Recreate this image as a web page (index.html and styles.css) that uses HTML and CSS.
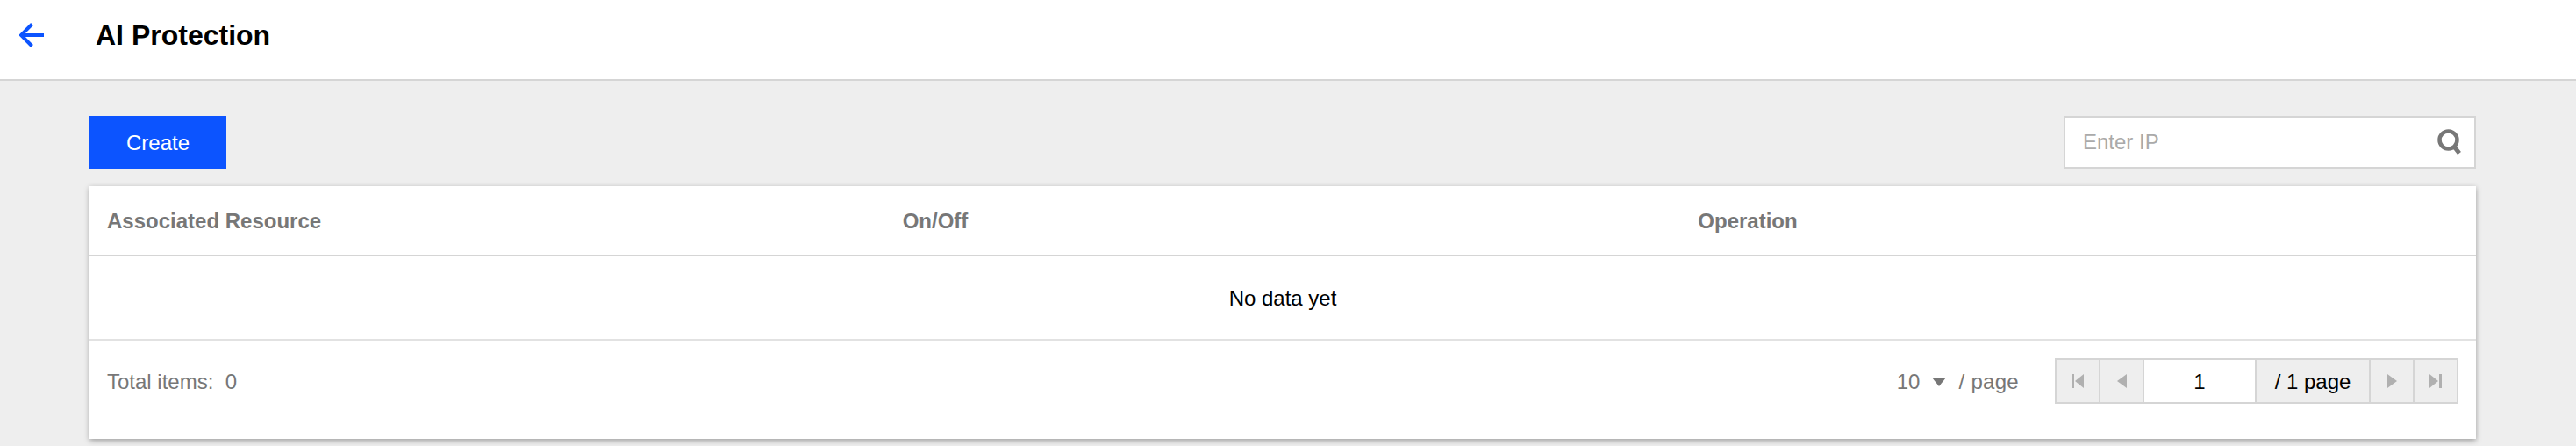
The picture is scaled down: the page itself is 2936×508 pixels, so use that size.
FILE: index.html
```html
<!DOCTYPE html>
<html lang="en">
<head>
<meta charset="utf-8">
<title>AI Protection</title>
<link rel="stylesheet" href="styles.css">
</head>
<body>
<header class="topbar">
  <a class="back" href="#" aria-label="Back">
    <svg width="28" height="28" viewBox="0 0 28 28"><path d="M28 14H3M14.500 1.500L2 14l12.500 12.500" fill="none" stroke="#0c54ff" stroke-width="4"/></svg>
  </a>
  <h1 class="title">AI Protection</h1>
</header>
<main class="content">
  <div class="toolbar">
    <button class="create" type="button">Create</button>
    <div class="search">
      <span class="placeholder">Enter IP</span>
      <svg class="search-icon" width="28" height="30" viewBox="0 0 28 30"><circle cx="12.500" cy="12.500" r="10" fill="none" stroke="#777" stroke-width="4.500"/><path d="M19 20l6 7.500" stroke="#777" stroke-width="5" fill="none"/></svg>
    </div>
  </div>
  <section class="panel">
    <div class="row head">
      <div class="cell">Associated Resource</div>
      <div class="cell">On/Off</div>
      <div class="cell">Operation</div>
    </div>
    <div class="empty">No data yet</div>
    <footer class="foot">
      <div class="total">Total items:&nbsp; 0</div>
      <div class="size">
        <span>10</span>
        <svg width="16" height="10" viewBox="0 0 16 10"><path d="M0 0h16L8 10z" fill="#777"/></svg>
        <span class="per">/ page</span>
      </div>
      <div class="pager">
        <div class="pbtn"><svg width="14" height="16" viewBox="0 0 14 16"><path d="M0 0h3v16H0zM14 0v16L4 8z" fill="#b0b0b0"/></svg></div>
        <div class="pbtn"><svg width="11" height="16" viewBox="0 0 11 16"><path d="M11 0v16L0 8z" fill="#b0b0b0"/></svg></div>
        <div class="pinput">1</div>
        <div class="ptotal">/ 1 page</div>
        <div class="pbtn"><svg width="11" height="16" viewBox="0 0 11 16"><path d="M0 0v16l11-8z" fill="#b0b0b0"/></svg></div>
        <div class="pbtn last"><svg width="14" height="16" viewBox="0 0 14 16"><path d="M14 0h-3v16h3zM0 0v16l10-8z" fill="#b0b0b0"/></svg></div>
      </div>
    </footer>
  </section>
</main>
</body>
</html>
```
FILE: styles.css
```css
* { box-sizing: border-box; }
html, body { margin: 0; height: 100%; }
body {
  background: #eeeeee;
  font-family: "Liberation Sans", Arial, sans-serif;
  font-size: 24px;
  color: #000;
  overflow: hidden;
}
.topbar {
  height: 92px;
  background: #fff;
  border-bottom: 2px solid #d5d5d5;
  display: flex;
  align-items: center;
  padding: 0 0 10px 22px;
}
.back { display: flex; width: 87px; }
.title { margin: 0; font-size: 32px; font-weight: 700; line-height: 40px; }
.content { padding: 40px 114px 0 102px; }
.toolbar {
  display: flex;
  justify-content: space-between;
  height: 60px;
  margin-bottom: 20px;
}
.create {
  width: 156px;
  height: 60px;
  border: 0;
  padding: 2px 0 0;
  background: #0c54ff;
  color: #fff;
  font: inherit;
}
.search {
  width: 470px;
  height: 60px;
  background: #fff;
  border: 2px solid #d5d5d5;
  display: flex;
  align-items: center;
  justify-content: space-between;
  padding: 0 14px 0 20px;
}
.placeholder { color: #aaa; }
.panel {
  background: #fff;
  box-shadow: 0 2px 6px rgba(0, 0, 0, .35);
  height: 288px;
}
.row.head {
  display: grid;
  grid-template-columns: repeat(3, 1fr);
  height: 80px;
  padding-top: 1px;
  border-bottom: 2px solid #d5d5d5;
  align-items: center;
  color: #777;
  font-weight: 700;
}
.cell { padding: 0 20px; }
.empty {
  height: 96px;
  padding-top: 2px;
  border-bottom: 2px solid #e2e2e2;
  display: flex;
  align-items: center;
  justify-content: center;
}
.foot {
  height: 112px;
  display: flex;
  align-items: center;
  padding: 0 20px 20px;
  color: #777;
}
.total { flex: 1; padding-top: 2px; }
.size {
  display: flex;
  align-items: center;
  gap: 14px;
  margin-right: 41px;
  padding-top: 2px;
}
.per { letter-spacing: .3px; }
.pager {
  display: flex;
  height: 52px;
  border: 2px solid #d5d5d5;
  background: #eee;
  color: #000;
}
.pbtn {
  width: 50px;
  display: flex;
  align-items: center;
  justify-content: center;
  border-right: 2px solid #d5d5d5;
}
.pbtn.last { width: 48px; border-right: 0; }
.pinput {
  width: 128px;
  padding-top: 2px;
  background: #fff;
  border-right: 2px solid #d5d5d5;
  display: flex;
  align-items: center;
  justify-content: center;
}
.ptotal {
  width: 130px;
  padding-top: 2px;
  border-right: 2px solid #d5d5d5;
  display: flex;
  align-items: center;
  justify-content: center;
}
```
